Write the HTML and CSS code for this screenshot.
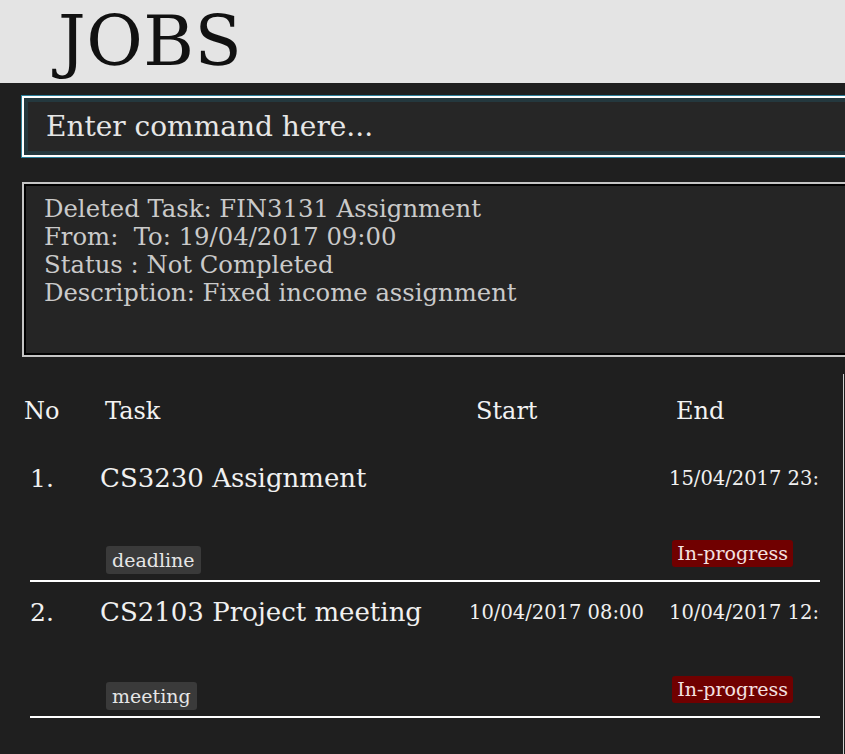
FILE: index.html
```html
<!DOCTYPE html>
<html>
<head>
<meta charset="utf-8">
<link rel="stylesheet" href="styles.css">
</head>
<body>
<header class="app-header">
  <h1 class="app-title">JOBS</h1>
</header>
<main class="app-main">
  <div class="command-box">
    <span class="command-placeholder">Enter command here...</span>
  </div>
  <div class="result-box">
    <div class="result-line">Deleted Task: FIN3131 Assignment</div>
    <div class="result-line">From:&nbsp; To: 19/04/2017 09:00</div>
    <div class="result-line">Status : Not Completed</div>
    <div class="result-line">Description: Fixed income assignment</div>
  </div>
  <section class="task-list">
    <div class="list-head">
      <span class="col-no">No</span>
      <span class="col-task">Task</span>
      <span class="col-start">Start</span>
      <span class="col-end">End</span>
    </div>
    <div class="task-row">
      <div class="row-main">
        <span class="task-no">1.</span>
        <span class="task-name">CS3230 Assignment</span>
        <span class="task-start"></span>
        <span class="task-end">15/04/2017 23:59</span>
      </div>
      <div class="row-tags">
        <span class="tag">deadline</span>
        <span class="status">In-progress</span>
      </div>
    </div>
    <div class="task-row">
      <div class="row-main">
        <span class="task-no">2.</span>
        <span class="task-name">CS2103 Project meeting</span>
        <span class="task-start">10/04/2017 08:00</span>
        <span class="task-end">10/04/2017 12:00</span>
      </div>
      <div class="row-tags">
        <span class="tag">meeting</span>
        <span class="status">In-progress</span>
      </div>
    </div>
  </section>
</main>
</body>
</html>
```

FILE: styles.css
```css
html, body {
  margin: 0;
  padding: 0;
  background: #1f1f1f;
  overflow: hidden;
  height: 754px;
}
body {
  font-family: "DejaVu Serif", serif;
}
.app-header {
  height: 83px;
  background: #e4e4e4;
  padding-left: 58px;
  box-sizing: border-box;
}
.app-title {
  margin: 0;
  font-family: "DejaVu Serif", serif;
  font-weight: normal;
  font-size: 69px;
  letter-spacing: 0.5px;
  line-height: 82px;
  color: #111;
}
.app-main {
  padding: 13px 0 0 22px;
}
.command-box {
  height: 61px;
  width: 900px;
  box-sizing: border-box;
  background: #262626;
  border: 2px solid #ffffff;
  box-shadow: 0 0 0 1px #2a7f9a, inset 0 0 0 4px #24383e;
  display: flex;
  align-items: center;
  padding-left: 22px;
}
.command-placeholder {
  font-size: 28px;
  color: #e6e6e6;
}
.result-box {
  margin-top: 25px;
  height: 175px;
  width: 900px;
  box-sizing: border-box;
  background: #252525;
  border: 2px solid #c4c4c4;
  box-shadow: inset 0 0 0 2px #000;
  padding: 11px 0 0 20px;
  color: #cacaca;
  font-size: 24.3px;
  line-height: 28px;
}
.task-list {
  margin-top: 17px;
  width: 821px;
  border-right: 1px solid #cfcfcf;
  min-height: 400px;
}
.list-head {
  display: flex;
  align-items: center;
  height: 74px;
  color: #f2f2f2;
  font-size: 24px;
}
.col-no { width: 81px; margin-left: 2px; }
.col-task { width: 371px; }
.col-start { width: 200px; }
.task-row {
  margin-left: 8px;
  width: 790px;
  border-bottom: 2px solid #ffffff;
  height: 134px;
  box-sizing: border-box;
  display: flex;
  flex-direction: column;
  justify-content: space-between;
  padding-bottom: 6px;
}
.task-row + .task-row {
  height: 136px;
}
.row-main {
  display: flex;
  align-items: center;
  height: 60px;
  color: #f0f0f0;
  white-space: nowrap;
}
.task-no {
  width: 70px;
  font-size: 25px;
}
.task-name {
  width: 369px;
  font-size: 26px;
}
.task-start {
  width: 200px;
  font-size: 19.5px;
}
.task-end {
  width: 151px;
  overflow: hidden;
  font-size: 19.5px;
}
.row-tags {
  display: flex;
  align-items: flex-start;
  padding-left: 76px;
}
.tag {
  margin-top: 6px;
  background: #3a3a3a;
  color: #e6e6e6;
  font-size: 19px;
  line-height: 28px;
  padding: 0 6px;
  border-radius: 3px;
}
.status {
  margin-left: auto;
  margin-right: 27px;
  background: #700000;
  color: #f4e0e0;
  font-size: 19px;
  line-height: 27px;
  padding: 0 5px;
  border-radius: 3px;
}
```
